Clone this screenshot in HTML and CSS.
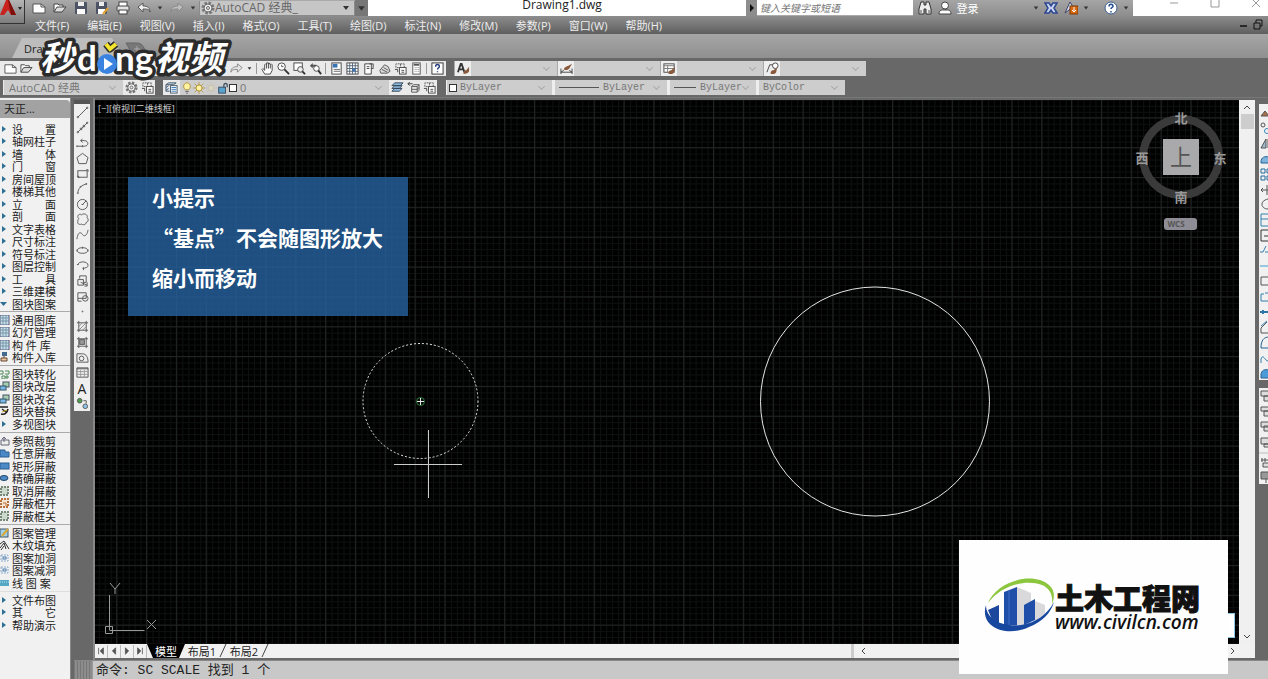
FILE: index.html
```
<!DOCTYPE html>
<html lang="zh-CN">
<head>
<meta charset="UTF-8">
<meta name="viewport" content="width=device-width, initial-scale=1.0">
<title>Drawing1.dwg</title>
<link rel="stylesheet" href="styles.css">
</head>
<body>

<!-- icon set -->
<svg class="defs" aria-hidden="true">
<symbol id="i-new" viewBox="0 0 14 14"><path d="M1 3h8l4 3v6H1z" fill="#fff" stroke="#555"/><path d="M9 3v3h4" fill="none" stroke="#555"/></symbol>
<symbol id="i-open" viewBox="0 0 14 14"><path d="M1 11V3h4l1 1h4v2" fill="#fff" stroke="#444"/><path d="M1 11l3-5h9l-4 5z" fill="#ddd" stroke="#444"/></symbol>
<symbol id="i-save" viewBox="0 0 14 14"><rect x="1" y="1" width="12" height="12" rx="1" fill="#4b5364"/><rect x="4" y="1" width="6" height="4" fill="#eee"/><rect x="3" y="8" width="8" height="5" fill="#fff"/></symbol>
<symbol id="i-saveas" viewBox="0 0 14 14"><rect x="1" y="1" width="11" height="12" rx="1" fill="#4b5364"/><rect x="4" y="1" width="5" height="4" fill="#eee"/><rect x="3" y="8" width="7" height="5" fill="#fff"/><path d="M8 13l5-6" stroke="#e0a030" stroke-width="2"/></symbol>
<symbol id="i-print" viewBox="0 0 14 14"><rect x="3" y="1" width="8" height="5" fill="#fff" stroke="#444"/><rect x="1" y="5" width="12" height="5" rx="1" fill="#e4e4e4" stroke="#444"/><rect x="3" y="9" width="8" height="4" fill="#fff" stroke="#444"/></symbol>
<symbol id="i-undo" viewBox="0 0 14 14"><path d="M1 6l5-4v3c5 0 7 2 7 6-1-3-3-3-7-3v3z" fill="#eee" stroke="#555"/></symbol>
<symbol id="i-redo" viewBox="0 0 14 14"><path d="M13 6L8 2v3C3 5 1 7 1 11c1-3 3-3 7-3v3z" fill="#ddd" fill-opacity=".5" stroke="#888"/></symbol>
<symbol id="i-gear" viewBox="0 0 14 14"><circle cx="7" cy="7" r="5" fill="none" stroke="#777" stroke-width="3" stroke-dasharray="2.4 1.5"/><circle cx="7" cy="7" r="4" fill="#eee" stroke="#666"/><circle cx="7" cy="7" r="1.500" fill="none" stroke="#666"/></symbol>
<symbol id="i-hand" viewBox="0 0 14 14"><path d="M4 13L1 8l1-1 2 2V3l1-1 1 1V1h2v1l1-1 1 2 1-1 1 1v6l-2 4z" fill="#fff" stroke="#444"/><path d="M6 3v4M8 2v5M10 3v4" stroke="#444"/></symbol>
<symbol id="i-zoom" viewBox="0 0 14 14"><circle cx="5" cy="5" r="4" fill="#fff" stroke="#444"/><path d="M8 8l5 5" stroke="#333" stroke-width="2"/><path d="M5 3v2h2" fill="none" stroke="#555"/></symbol>
<symbol id="i-zoomwin" viewBox="0 0 14 14"><rect x="1" y="1" width="9" height="8" fill="#fff" stroke="#444"/><circle cx="8" cy="8" r="3" fill="#eee" stroke="#444"/><path d="M10 10l3 3" stroke="#333" stroke-width="2"/></symbol>
<symbol id="i-zoomprev" viewBox="0 0 14 14"><path d="M1 4l3-3v2h4v2H4v2z" fill="#555"/><circle cx="8" cy="7" r="3" fill="#fff" stroke="#444"/><path d="M10 9l3 4" stroke="#333" stroke-width="2"/></symbol>
<symbol id="i-props" viewBox="0 0 14 14"><rect x="2" y="1" width="10" height="12" fill="#fff" stroke="#444"/><rect x="3" y="2" width="5" height="4" fill="#3875b5"/><path d="M4 8h7M4 10h7" stroke="#666"/></symbol>
<symbol id="i-grid" viewBox="0 0 14 14"><rect x="1" y="1" width="12" height="12" fill="#fff" stroke="#444"/><path d="M1 4h12M1 7h12M1 10h12M4 1v12M7 1v12M10 1v12" stroke="#567"/><rect x="7" y="7" width="3" height="3" fill="#3875b5"/></symbol>
<symbol id="i-palette" viewBox="0 0 14 14"><path d="M3 2h7v11H3z" fill="#fff" stroke="#444"/><path d="M8 2h4v5h-2M5 5h3M5 7h3" fill="none" stroke="#444"/></symbol>
<symbol id="i-markup" viewBox="0 0 14 14"><path d="M2 9l5-6 4 2 2 5-3 2H3z" fill="#ddd" stroke="#555"/><path d="M4 8l6 3M6 6l5 3" stroke="#555"/></symbol>
<symbol id="i-sheets" viewBox="0 0 14 14"><path d="M2 6V2h5v4zM7 2h4v4" fill="none" stroke="#555" stroke-dasharray="2 1"/><rect x="6" y="6" width="7" height="7" fill="#fff" stroke="#444"/><path d="M1 8h3v3M8 9h3M8 11h3" fill="none" stroke="#444"/></symbol>
<symbol id="i-calc" viewBox="0 0 14 14"><rect x="3" y="1" width="8" height="12" fill="#fff" stroke="#555"/><path d="M4 3h6" stroke="#555" stroke-width="2"/><path d="M5 6h5M5 8h5M5 10h5" stroke="#777" stroke-dasharray="1 1"/></symbol>
<symbol id="i-help" viewBox="0 0 14 14"><rect x="1" y="1" width="12" height="12" fill="#fff" stroke="#333"/><path d="M5 5c0-3 4-3 4 0 0 1-2 1.500-2 3M7 10v1" fill="none" stroke="#223a7a" stroke-width="1.500"/></symbol>
<symbol id="i-brush" viewBox="0 0 14 14"><path d="M1 11L4 2h1l3 9M3 8h4" fill="none" stroke="#333" stroke-width="2"/><path d="M7 13c0-4 2-4 3-4l3-4v5c-1 2-3 3-6 3" fill="#8a5a3c"/></symbol>
<symbol id="i-dim" viewBox="0 0 14 14"><path d="M1 7v6M13 7v6M1 11h12M1 11l3-2M13 11l-3-2" fill="none" stroke="#444"/><path d="M4 8c1-3 3-3 5-4l4-2-3 5c-2 2-4 2-6 1" fill="#8a5a3c"/></symbol>
<symbol id="i-tblstyle" viewBox="0 0 14 14"><rect x="1" y="2" width="11" height="9" fill="#fff" stroke="#444"/><path d="M1 4h11M5 4v7M1 7h11" stroke="#777"/><path d="M6 13c0-4 2-4 3-4l4-4-1 6c-1 2-3 2-6 2" fill="#8a5a3c"/></symbol>
<symbol id="i-leader" viewBox="0 0 14 14"><path d="M1 11l3-8h4" fill="none" stroke="#444"/><circle cx="10" cy="4" r="3" fill="#fff" stroke="#444"/><path d="M5 13c0-4 2-4 3-4l4-3-1 5c-1 2-3 2-6 2" fill="#8a5a3c"/></symbol>
<symbol id="i-layer" viewBox="0 0 14 14"><path d="M1 4l3-2h8l-3 2zM1 7l3-2M1 10l3-2M1 4v7h4" fill="#cde" stroke="#456"/><rect x="6" y="5" width="7" height="8" fill="#fff" stroke="#456"/><path d="M7 7h5M7 9h5M7 11h5" stroke="#3875b5"/></symbol>
<symbol id="i-layers" viewBox="0 0 14 14"><path d="M1 11l3-3h8l-3 3zM1 8l3-3h8l-3 3zM1 5l3-3h9l-3 3z" fill="#8fb9dc" stroke="#345"/></symbol>
<symbol id="i-layerprev" viewBox="0 0 14 14"><path d="M1 3h5M3 1L1 3l2 2" fill="none" stroke="#333"/><path d="M5 6l2-2h6l-2 2zM5 6v6h6l2-2V4M5 9h6l2-2M11 6v6" fill="none" stroke="#555"/></symbol>
<symbol id="i-bulb" viewBox="0 0 14 14"><path d="M5 9C1 5 4 1 7 1s6 4 2 8z" fill="#fff2a0" stroke="#a98a30"/><path d="M5 11h4M6 13h2" stroke="#555"/></symbol>
<symbol id="i-sun" viewBox="0 0 14 14"><path d="M7 0v14M0 7h14M2 2l10 10M12 2L2 12" stroke="#b8963c"/><circle cx="7" cy="7" r="3.500" fill="#fff2a0" stroke="#a98a30"/></symbol>
<symbol id="i-lock" viewBox="0 0 14 14"><path d="M8 7V4c0-3 4-3 4 0v2" fill="none" stroke="#456" stroke-width="1.500"/><rect x="2" y="6" width="8" height="7" fill="#5ba3cf" stroke="#345"/></symbol>
<symbol id="i-down" viewBox="0 0 8 8"><path d="M1 2h6L4 6z" fill="#333"/></symbol>
<symbol id="i-search" viewBox="0 0 14 14"><path d="M1 8l2-7h3v3h2V1h3l2 7v5H8V8H6v5H1z" fill="#eee" stroke="#333"/><path d="M3 9v3M11 9v3" stroke="#555"/></symbol>
<symbol id="i-user" viewBox="0 0 14 14"><circle cx="7" cy="4.500" r="3.500" fill="#fff" stroke="#444"/><path d="M1 13c0-4 3-4 4-4h4c1 0 4 0 4 4z" fill="#fff" stroke="#444"/></symbol>
<symbol id="i-x" viewBox="0 0 14 14"><path d="M1 2h4l2 3 2-3h4L10 7l3 5H9L7 9l-2 3H1l3-5z" fill="#c8d4f2" stroke="#2c4690" stroke-width="1.500"/></symbol>
<symbol id="i-update" viewBox="0 0 14 14"><path d="M1 12l5-11 3 5z" fill="#cfe0f5" stroke="#446"/><rect x="6" y="5" width="8" height="8" fill="#d86a14" stroke="#803800"/><path d="M10 6v4M8 9l2 2 2-2" fill="none" stroke="#fff"/></symbol>
<symbol id="i-about" viewBox="0 0 14 14"><circle cx="7" cy="7" r="6" fill="#fff" stroke="#3b5f92"/><path d="M5 5.500c0-3 4-3 4 0 0 1-2 1-2 2.500M7 10v1.500" fill="none" stroke="#24508f" stroke-width="1.500"/></symbol>

<symbol id="d-line" viewBox="0 0 14 14"><path d="M2 12L12 2"/><circle cx="2" cy="12" r=".8"/><circle cx="12" cy="2" r=".8"/></symbol>
<symbol id="d-xline" viewBox="0 0 14 14"><path d="M2 12L12 2"/><circle cx="2" cy="12" r=".8"/><circle cx="12" cy="2" r=".8"/><circle cx="5.500" cy="8.500" r="1"/><circle cx="8.500" cy="5.500" r="1"/></symbol>
<symbol id="d-pline" viewBox="0 0 14 14"><path d="M1 11h8c5 0 5-6 0-6H5M1 10v2M7 3L5 5l2 2M7 10v2"/></symbol>
<symbol id="d-poly" viewBox="0 0 14 14"><path d="M7 1.500l6 4.500-2 6.500H3L1 6z"/></symbol>
<symbol id="d-rect" viewBox="0 0 14 14"><rect x="2" y="4" width="10" height="7"/><path d="M1 10h2v2M11 3h2v2"/></symbol>
<symbol id="d-arc" viewBox="0 0 14 14"><path d="M2 12c0-5 4-9 10-10M1 12h2M4 5h2M11 1v2"/></symbol>
<symbol id="d-circle" viewBox="0 0 14 14"><circle cx="7" cy="7" r="5.500"/><path d="M7 7l4-4M6 7h2"/></symbol>
<symbol id="d-cloud" viewBox="0 0 14 14"><path d="M3 6c-3-3 1-6 3-4 2-2 7-1 6 3 2 2 1 5-1 5 0 3-4 3-5 2-3 1-5-1-4-3 0-1 0-2 1-3z"/></symbol>
<symbol id="d-spline" viewBox="0 0 14 14"><path d="M1 12c1-8 4-8 6-5s5 1 6-5"/></symbol>
<symbol id="d-ellipse" viewBox="0 0 14 14"><ellipse cx="7" cy="7" rx="5.500" ry="3"/><path d="M1 6v2M13 6v2M7 3v2"/></symbol>
<symbol id="d-earc" viewBox="0 0 14 14"><path d="M2 6c1-4 11-4 11 1 0 2-3 3-6 3M8 9v3M1 6h2"/></symbol>
<symbol id="d-insert" viewBox="0 0 14 14"><path d="M4 5V2h7v7H8M2 6h6v6H2zM5 9l7 3M12 9v4H9"/></symbol>
<symbol id="d-block" viewBox="0 0 14 14"><path d="M2 3h9v6H2z"/><circle cx="10" cy="9" r="3"/><path d="M2 9v3h4"/></symbol>
<symbol id="d-point" viewBox="0 0 14 14"><circle cx="7" cy="7" r=".5"/></symbol>
<symbol id="d-hatch" viewBox="0 0 14 14"><path d="M3 1v12M11 1v12M1 3h12M1 11h12"/><path d="M3 7l4-4M3 11l8-8M7 11l4-4" stroke="#888"/></symbol>
<symbol id="d-grad" viewBox="0 0 14 14"><rect x="4" y="4" width="5" height="5" fill="#999"/><path d="M3 1v12M11 1v12M1 3h12M1 11h12"/></symbol>
<symbol id="d-region" viewBox="0 0 14 14"><path d="M1 12V3h6c4 0 6 4 6 9z"/><circle cx="6" cy="8" r="2.500"/></symbol>
<symbol id="d-table" viewBox="0 0 14 14"><path d="M1 2h12v10H1zM1 3h12"/><path d="M1 6h12M1 9h12M5 4v8M9 4v8" stroke="#999"/></symbol>
<symbol id="d-add" viewBox="0 0 14 14"><circle cx="4" cy="4" r="2.500" fill="#4ba04b"/><circle cx="10" cy="10" r="2.500" fill="#8cc6ea"/><path d="M8 4h3v3"/></symbol>

<symbol id="p-arrow" viewBox="0 0 10 10"><path d="M2 2v6l4-3z" fill="#2f6f93"/></symbol>
<symbol id="p-open" viewBox="0 0 10 10"><path d="M0 3h7L3.500 7z" fill="#2f6f93"/></symbol>
<symbol id="p-lib" viewBox="0 0 10 10"><rect x="0" y="0" width="9" height="10" fill="#c6dfea" stroke="#557"/><path d="M0 3h9M0 6h9M3 0v10M6 0v10" stroke="#7896a8"/></symbol>
<symbol id="p-in" viewBox="0 0 10 10"><rect x="2" y="0" width="5" height="4" fill="#456a90"/><path d="M4 4v2M1 6h6v3H1z" fill="#f0c8a0" stroke="#643"/></symbol>
<symbol id="p-conv" viewBox="0 0 10 10"><path d="M0 2h3v3H0M5 2h4v3H5M2 7h3v3H2zM7 6v4M5 8h4" fill="none" stroke="#4c8a58"/></symbol>
<symbol id="p-edit" viewBox="0 0 10 10"><rect x="3" y="1" width="6" height="5" fill="#a8d0b0" stroke="#456"/><rect x="0" y="5" width="6" height="4" fill="#7ab8e8" stroke="#356"/></symbol>
<symbol id="p-swap" viewBox="0 0 10 10"><path d="M0 1h8M1 8c4 1 6-1 7-5M2 3l4 3" stroke="#222" stroke-width="1.500" fill="none"/><path d="M2 6l5-2" stroke="#c8aa30"/></symbol>
<symbol id="p-clip" viewBox="0 0 10 10"><path d="M1 4h8v5H1zM4 6V1M2 3l2-2 2 2" fill="#eee" stroke="#667"/></symbol>
<symbol id="p-blue" viewBox="0 0 10 10"><path d="M0 2h5v2h4v5H0z" fill="#4b89c7" stroke="#2c5d90"/></symbol>
<symbol id="p-box" viewBox="0 0 10 10"><rect x="0" y="2" width="9" height="6" fill="#4b89c7" stroke="#2c5d90"/></symbol>
<symbol id="p-oval" viewBox="0 0 10 10"><ellipse cx="4" cy="5" rx="4" ry="2.500" fill="#4b89c7" stroke="#24456a"/></symbol>
<symbol id="p-frame" viewBox="0 0 10 10"><rect x="1" y="1" width="7" height="8" fill="#ccd8cc" stroke="#788878" stroke-width="2" stroke-dasharray="2 1"/></symbol>
<symbol id="p-orange" viewBox="0 0 10 10"><rect x="1" y="1" width="7" height="8" fill="#f6e5d4" stroke="#b8703c" stroke-width="2" stroke-dasharray="2 1"/><path d="M3 5h3v3" stroke="#b8703c" fill="none"/></symbol>
<symbol id="p-pen" viewBox="0 0 10 10"><rect x="0" y="1" width="8" height="8" fill="#9fd0e8" stroke="#456"/><path d="M2 8l6-7" stroke="#d8a830" stroke-width="2"/></symbol>
<symbol id="p-wood" viewBox="0 0 10 10"><path d="M0 4l4-3 5 8M0 8l4-5 2 6M1 10l3-4" fill="none" stroke="#333"/></symbol>
<symbol id="p-hole" viewBox="0 0 10 10"><rect x="1" y="2" width="7" height="6" fill="#eef4fa" stroke="#8ba8c6" stroke-dasharray="2 1"/><rect x="3" y="4" width="3" height="2" fill="#fff" stroke="#4a78a8"/></symbol>
<symbol id="p-strip" viewBox="0 0 10 10"><rect x="0" y="2" width="9" height="6" fill="#55a8c4"/><path d="M0 4h9" stroke="#bde" stroke-dasharray="1 1"/></symbol>
</svg>

<header class="titlebar">
<div class="quick">
<button class="app" aria-label="应用程序菜单"><svg viewBox="0 0 24 23"><path d="M0 15L6 0h3l7 15h-5L8 10l-4 5z" fill="#c9211e"/><path d="M8 0l3 15h5L9 0z" fill="#7d100d"/><path d="M18 7h4l-2 3z" fill="#222"/></svg></button>
<button aria-label="新建"><svg><use href="#i-new"/></svg></button>
<button aria-label="打开"><svg><use href="#i-open"/></svg></button>
<button aria-label="保存"><svg><use href="#i-save"/></svg></button>
<button aria-label="另存为"><svg><use href="#i-saveas"/></svg></button>
<button aria-label="打印"><svg><use href="#i-print"/></svg></button>
<button aria-label="放弃"><svg><use href="#i-undo"/></svg></button>
<button class="tiny" aria-label="放弃列表"><svg><use href="#i-down"/></svg></button>
<button aria-label="重做"><svg><use href="#i-redo"/></svg></button>
<button class="tiny" aria-label="重做列表"><svg><use href="#i-down"/></svg></button>
<div class="workspace">
<svg class="gear"><use href="#i-gear"/></svg>
<select aria-label="工作空间"><option>AutoCAD 经典_</option></select>
<svg class="caret"><use href="#i-down"/></svg>
</div>
<button class="more" aria-label="自定义"><svg><use href="#i-down"/></svg></button>
</div>
<h1 class="title">Drawing1.dwg</h1>
<div class="search"><button aria-label="展开"><svg viewBox="0 0 8 8"><path d="M2 0v8l4-4z" fill="#111"/></svg></button><input type="text" placeholder="键入关键字或短语" aria-label="搜索"></div>
<div class="account">
<button aria-label="查找"><svg><use href="#i-search"/></svg></button>
<button class="login"><svg><use href="#i-user"/></svg>登录</button>
<button class="tiny push" aria-label="账户"><svg><use href="#i-down"/></svg></button>
<button aria-label="Exchange"><svg><use href="#i-x"/></svg></button>
<button aria-label="更新"><svg><use href="#i-update"/></svg></button>
<button class="tiny" aria-label="更新列表"><svg><use href="#i-down"/></svg></button>
<button class="about" aria-label="帮助"><svg><use href="#i-about"/></svg></button>
<button class="tiny" aria-label="帮助列表"><svg><use href="#i-down"/></svg></button>
</div>
<div class="window">
<button aria-label="最小化"><svg viewBox="0 0 10 10"><path d="M1 5h8"/></svg></button>
<button aria-label="最大化"><svg viewBox="0 0 10 10"><path d="M1 1h8v8H1z"/></svg></button>
<button aria-label="关闭"><svg viewBox="0 0 10 10"><path d="M1 1l8 8M9 1L1 9"/></svg></button>
</div>
</header>

<nav class="menubar">
<button>文件(F)</button>
<button>编辑(E)</button>
<button>视图(V)</button>
<button>插入(I)</button>
<button>格式(O)</button>
<button>工具(T)</button>
<button>绘图(D)</button>
<button>标注(N)</button>
<button>修改(M)</button>
<button>参数(P)</button>
<button>窗口(W)</button>
<button>帮助(H)</button>
<svg class="docwin" viewBox="0 0 24 12"><path d="M0 7h7" stroke="#111" stroke-width="1.500"/><path d="M14 4h6v6h-6zM16 4V1h6v6h-2" fill="none" stroke="#111"/></svg>
</nav>

<div class="filetabs">
<button class="filetab">Drawing1</button>
<button class="newtab" aria-label="新图形"><svg viewBox="0 0 24 16"><path d="M2 1h11c6 0 8 6 9 12H12C8 13 6 8 2 1z" fill="#777" stroke="#666"/><path d="M13 4v6M10 7h6" stroke="#aaa"/></svg></button>
</div>

<div class="toolbars">
<div class="row">
<div class="bar light std">
<button aria-label="新建"><svg><use href="#i-new"/></svg></button>
<button aria-label="打开"><svg><use href="#i-open"/></svg></button>
<button class="push" aria-label="重做"><svg><use href="#i-redo"/></svg></button>
<button class="tiny" aria-label="重做列表"><svg><use href="#i-down"/></svg></button>
<i class="sep"></i>
<button aria-label="平移"><svg><use href="#i-hand"/></svg></button>
<button aria-label="缩放"><svg><use href="#i-zoom"/></svg></button>
<button aria-label="窗口缩放"><svg><use href="#i-zoomwin"/></svg></button>
<button aria-label="缩放上一个"><svg><use href="#i-zoomprev"/></svg></button>
<i class="sep"></i>
<button aria-label="特性"><svg><use href="#i-props"/></svg></button>
<button aria-label="设计中心"><svg><use href="#i-grid"/></svg></button>
<button aria-label="工具选项板"><svg><use href="#i-palette"/></svg></button>
<button aria-label="图纸集"><svg><use href="#i-markup"/></svg></button>
<button aria-label="标记集"><svg><use href="#i-sheets"/></svg></button>
<button aria-label="计算器"><svg><use href="#i-calc"/></svg></button>
<i class="sep"></i>
<button aria-label="帮助"><svg><use href="#i-help"/></svg></button>
</div>
<div class="bar styles">
<div class="pick"><svg><use href="#i-brush"/></svg><span class="combo"><select aria-label="文字样式"><option></option></select></span></div>
<div class="pick"><svg><use href="#i-dim"/></svg><span class="combo"><select aria-label="标注样式"><option></option></select></span></div>
<div class="pick"><svg><use href="#i-tblstyle"/></svg><span class="combo"><select aria-label="表格样式"><option></option></select></span></div>
<div class="pick"><svg><use href="#i-leader"/></svg><span class="combo"><select aria-label="引线样式"><option></option></select></span></div>
</div>
</div>
<div class="row">
<div class="bar light space">
<span class="combo"><select aria-label="工作空间设置"><option>AutoCAD 经典</option></select></span>
<button aria-label="设置"><svg><use href="#i-gear"/></svg></button>
<button aria-label="保存空间"><svg><use href="#i-sheets"/></svg></button>
</div>
<div class="bar light layer">
<button aria-label="图层特性"><svg><use href="#i-layer"/></svg></button>
<span class="combo state">
<svg><use href="#i-bulb"/></svg><svg><use href="#i-sun"/></svg><svg class="dim"><use href="#i-sun"/></svg><svg><use href="#i-lock"/></svg><b class="swatch"></b>
<select aria-label="图层"><option>0</option></select></span>
<button aria-label="置为当前"><svg><use href="#i-layers"/></svg></button>
<button aria-label="上一图层"><svg><use href="#i-layerprev"/></svg></button>
<button aria-label="图层状态"><svg><use href="#i-sheets"/></svg></button>
</div>
<div class="bar props">
<span class="combo color"><b class="swatch"></b><select aria-label="颜色"><option>ByLayer</option></select></span>
<span class="combo ltype"><b class="rule"></b><select aria-label="线型"><option>ByLayer</option></select></span>
<span class="combo lweight"><b class="rule"></b><select aria-label="线宽"><option>ByLayer</option></select></span>
<span class="combo plot"><select aria-label="打印样式"><option>ByColor</option></select></span>
</div>
</div>
</div>

<div class="main">
<aside class="palette">
<h2>天正...</h2>
<ul>
<li><svg><use href="#p-arrow"/></svg>设　　置</li>
<li><svg><use href="#p-arrow"/></svg>轴网柱子</li>
<li><svg><use href="#p-arrow"/></svg>墙　　体</li>
<li><svg><use href="#p-arrow"/></svg>门　　窗</li>
<li><svg><use href="#p-arrow"/></svg>房间屋顶</li>
<li><svg><use href="#p-arrow"/></svg>楼梯其他</li>
<li><svg><use href="#p-arrow"/></svg>立　　面</li>
<li><svg><use href="#p-arrow"/></svg>剖　　面</li>
<li><svg><use href="#p-arrow"/></svg>文字表格</li>
<li><svg><use href="#p-arrow"/></svg>尺寸标注</li>
<li><svg><use href="#p-arrow"/></svg>符号标注</li>
<li><svg><use href="#p-arrow"/></svg>图层控制</li>
<li><svg><use href="#p-arrow"/></svg>工　　具</li>
<li><svg><use href="#p-arrow"/></svg>三维建模</li>
<li><svg><use href="#p-open"/></svg>图块图案</li>
</ul>
<ul class="tight">
<li><svg><use href="#p-lib"/></svg>通用图库</li>
<li><svg><use href="#p-lib"/></svg>幻灯管理</li>
<li><svg><use href="#p-lib"/></svg>构 件 库</li>
<li><svg><use href="#p-in"/></svg>构件入库</li>
</ul>
<ul>
<li><svg><use href="#p-conv"/></svg>图块转化</li>
<li><svg><use href="#p-edit"/></svg>图块改层</li>
<li><svg><use href="#p-edit"/></svg>图块改名</li>
<li><svg><use href="#p-swap"/></svg>图块替换</li>
<li><svg><use href="#p-arrow"/></svg>多视图块</li>
</ul>
<ul>
<li><svg><use href="#p-clip"/></svg>参照裁剪</li>
<li><svg><use href="#p-blue"/></svg>任意屏蔽</li>
<li><svg><use href="#p-box"/></svg>矩形屏蔽</li>
<li><svg><use href="#p-oval"/></svg>精确屏蔽</li>
<li><svg><use href="#p-frame"/></svg>取消屏蔽</li>
<li><svg><use href="#p-orange"/></svg>屏蔽框开</li>
<li><svg><use href="#p-frame"/></svg>屏蔽框关</li>
</ul>
<ul>
<li><svg><use href="#p-pen"/></svg>图案管理</li>
<li><svg><use href="#p-wood"/></svg>木纹填充</li>
<li><svg><use href="#p-hole"/></svg>图案加洞</li>
<li><svg><use href="#p-hole"/></svg>图案减洞</li>
<li><svg><use href="#p-strip"/></svg>线 图 案</li>
</ul>
<ul class="faint">
<li><svg><use href="#p-arrow"/></svg>文件布图</li>
<li><svg><use href="#p-arrow"/></svg>其　　它</li>
<li><svg><use href="#p-arrow"/></svg>帮助演示</li>
</ul>
</aside>

<div class="desk">
<div class="work">
<div class="draw">
<button aria-label="直线"><svg><use href="#d-line"/></svg></button>
<button aria-label="构造线"><svg><use href="#d-xline"/></svg></button>
<button aria-label="多段线"><svg><use href="#d-pline"/></svg></button>
<button aria-label="多边形"><svg><use href="#d-poly"/></svg></button>
<button aria-label="矩形"><svg><use href="#d-rect"/></svg></button>
<button aria-label="圆弧"><svg><use href="#d-arc"/></svg></button>
<button aria-label="圆"><svg><use href="#d-circle"/></svg></button>
<button aria-label="修订云线"><svg><use href="#d-cloud"/></svg></button>
<button aria-label="样条曲线"><svg><use href="#d-spline"/></svg></button>
<button aria-label="椭圆"><svg><use href="#d-ellipse"/></svg></button>
<button aria-label="椭圆弧"><svg><use href="#d-earc"/></svg></button>
<button aria-label="插入块"><svg><use href="#d-insert"/></svg></button>
<button aria-label="创建块"><svg><use href="#d-block"/></svg></button>
<button aria-label="点"><svg><use href="#d-point"/></svg></button>
<button aria-label="图案填充"><svg><use href="#d-hatch"/></svg></button>
<button aria-label="渐变色"><svg><use href="#d-grad"/></svg></button>
<button aria-label="面域"><svg><use href="#d-region"/></svg></button>
<button aria-label="表格"><svg><use href="#d-table"/></svg></button>
<button class="letter">A</button>
<button aria-label="添加选定对象"><svg><use href="#d-add"/></svg></button>
</div>

<div class="view">
<div class="canvas">
<svg class="drawing">
<defs>
<pattern id="minor" x="21.700" y="17.800" width="5.968" height="5.968" patternUnits="userSpaceOnUse"><path d="M.5 0v6M0 .5h6" stroke="#0e1010"/></pattern>
<pattern id="major" x="21.200" y="17.300" width="29.840" height="29.840" patternUnits="userSpaceOnUse"><path d="M.5 0v30M0 .5h30" stroke="#212424"/></pattern>
</defs>
<rect width="100%" height="100%" fill="url(#minor)"/>
<rect width="100%" height="100%" fill="url(#major)"/>
<circle cx="325.500" cy="301" r="57.500" class="selected"/>
<circle cx="780" cy="301.500" r="114.500" class="shape"/>
<circle cx="325.500" cy="301.500" r="4" class="snap"/>
<path d="M322 301.500h7M325.500 298v7" class="shape"/>
<path d="M299 364.500h68M333.500 330v68" class="cross"/>
<path d="M10.500 526.500h7v7h-7zM14.500 530.500h35M14.500 530V495M15 483l5 6 5-6M20 489v5M52 520l9 9M61 520l-9 9" class="ucs"/>
</svg>
<span class="viewname">[−][俯视][二维线框]</span>
<div class="tip">
<p>小提示</p>
<p>“基点”不会随图形放大</p>
<p>缩小而移动</p>
</div>
<svg class="viewcube" viewBox="0 0 100 130">
<circle cx="50" cy="52" r="38" fill="none" stroke="#3a3a3a" stroke-width="8"/>
<rect x="32" y="34" width="36" height="36" fill="#a9a9ab"/>
<text x="50" y="60" class="top">上</text>
<text x="50" y="18">北</text>
<text x="50" y="97">南</text>
<text x="11" y="58">西</text>
<text x="89" y="58">东</text>
<rect x="33" y="113" width="33" height="12" rx="3" fill="#8e8d95"/>
<text x="45" y="122" class="wcs">WCS</text>
</svg>
</div>
<div class="vscroll"><svg viewBox="0 0 10 10"><path d="M2 6l3-3 3 3"/></svg><i></i><svg class="end" viewBox="0 0 10 10"><path d="M2 4l3 3 3-3"/></svg></div>
<div class="layouts">
<button class="step" aria-label="第一个"><svg viewBox="0 0 10 10"><path d="M2 1v8M8 1v8L4 5z"/></svg></button>
<button class="step" aria-label="上一个"><svg viewBox="0 0 10 10"><path d="M7 1v8L3 5z"/></svg></button>
<button class="step" aria-label="下一个"><svg viewBox="0 0 10 10"><path d="M3 1v8l4-4z"/></svg></button>
<button class="step" aria-label="最后一个"><svg viewBox="0 0 10 10"><path d="M8 1v8M2 1v8l4-4z"/></svg></button>
<button class="model">模型</button>
<button class="sheet">布局1</button>
<svg class="slash" viewBox="0 0 8 14"><path d="M1 13L7 0"/></svg>
<button class="sheet">布局2</button>
<svg class="slash" viewBox="0 0 8 14"><path d="M1 13L7 0"/></svg>
<div class="hscroll"><svg viewBox="0 0 10 10"><path d="M6 2L3 5l3 3"/></svg><svg viewBox="0 0 10 10"><path d="M4 2l3 3-3 3"/></svg></div>
</div>
</div>

<div class="modify">
<svg class="mod" viewBox="0 0 9 276">
<g fill="none" stroke="#555">
<path d="M2 12l4-5 4 5z" fill="#a8714a"/>
<circle cx="4" cy="21" r="2"/><circle cx="8" cy="27" r="2.500" stroke="#3a87bd"/>
<path d="M2 44l5-9v9zM9 35v9" fill="#9dbbd0"/>
<path d="M2 58c0-5 4-6 8-5v6H2z" fill="#7eb3dc" stroke="#256395"/>
<path d="M2 65h4v4H2zM2 72h4v4H2zM8 65h4v4H8zM8 72h4v4H8z" stroke="#256b9c"/>
<path d="M2 86h8M4 84l-2 2 2 2M8 81v10"/>
<path d="M9 95c-9 2-7 10 0 10"/>
<path d="M2 110h8v12H2zM2 115h8" stroke="#3480ad"/>
<path d="M10 126H2v11h8M5 132h6" stroke="#333"/>
<path d="M1 148h3l3-6M6 148h4" stroke="#3480ad"/>
<path d="M1 162h10" stroke="#3aa0d0"/>
<path d="M10 173H2v8h8"/>
<path d="M2 190v7h8M2 190h3M6 189h4" stroke="#3480ad"/>
<path d="M1 208h10M4 206v4" stroke="#2b77a8" stroke-width="2"/>
<path d="M2 229v-5l6-6M2 229h8"/><path d="M2 222l6-5" stroke="#3480ad"/>
<path d="M10 233c-5 0-8 3-8 11h8" stroke="#256395"/>
<path d="M2 259v-4c2-6 4 2 7 2" stroke="#3480ad"/>
<path d="M2 271c0-5 4-6 8-5v8H2z" fill="#4a9bd8" stroke="#256395"/>
</g>
</svg>
<svg class="order" viewBox="0 0 9 96">
<g fill="#ddd" stroke="#555"><path d="M2 3h10v5H2zM5 8h8v5H5zM2 19h10v4H2zM5 23h8v5H5zM2 34h8v5H2zM5 38h8v5H5zM2 50h10v6H2zM5 56h8v3H5z"/><path d="M0 65h9" stroke="#bbb"/><path d="M2 72h8M3 70v4M6 70v4M4 75h8v4H4z"/><path d="M2 84h10v7H2zM7 91v4" fill="#999"/></g>
</svg>
</div>
</div>
<div class="command"><i class="grip"></i><output>命令: SC SCALE 找到 1 个</output></div>
</div>
</div>

<!-- video channel mark -->
<svg class="channel" viewBox="0 0 200 50">
<g class="mark"><text x="4" y="34" class="han">秒</text><text x="41" y="35" class="lat">d</text><text x="79" y="35" class="lat">ng</text><text x="119" y="34" class="han">视频</text></g>
<circle cx="71" cy="28" r="10" fill="#3a83e0"/>
<path d="M68 22v12l9-6z" fill="#fff"/>
<path d="M70 8l4 5 6-5" fill="none" stroke="#2b2b2b" stroke-width="7" stroke-linejoin="round"/>
<path d="M70 8l4 5 6-5" fill="none" stroke="#f4e42c" stroke-width="4"/>
</svg>

<i class="behind"></i>
<div class="sitecard">
<svg class="emblem" viewBox="0 0 72 60">
<path d="M5 33l11-5v20l-6-3z" fill="#1c479c"/>
<path d="M34 10l14 6v32H34z" fill="#d9d9dc"/><path d="M52 24l10 4v10l-10 9z" fill="#d9d9dc"/>
<path d="M21 15l13-5v38H21zM41 28l11-6v21l-11 5z" fill="#1f4fa8"/><path d="M26 13v35" stroke="#3d6fc4"/>
<path d="M5 26C14 4 50-6 66 8c7 6 5 14 3 20 1-9-1-16-10-20C43 2 18 8 5 26z" fill="#8cc63f"/>
<path d="M3 28c-7 22 20 33 43 22C59 45 68 36 71 25 64 38 52 46 38 48 20 50 3 43 3 28z" fill="#17479e"/>
</svg>
<div class="sitename"><strong>土木工程网</strong><a href="#">www.civilcn.com</a></div>
</div>
</body>
</html>
```

FILE: styles.css
```
* {
box-sizing: border-box;
}
body {
margin: 0;
height: 100vh;
display: flex;
flex-direction: column;
overflow: hidden;
position: relative;
background: #686868;
color: #222;
font-family: "Open Sans", "Noto Sans CJK SC", sans-serif;
font-size: 11px;
}
button, select, input {
font: inherit;
color: inherit;
background: none;
border: 0;
padding: 0;
margin: 0;
}
button {
display: flex;
align-items: center;
justify-content: center;
flex: none;
}
select {
appearance: none;
outline: none;
}
svg {
flex: none;
display: block;
}
h1, h2, p, ul {
margin: 0;
padding: 0;
}
h1, h2 {
font-weight: normal;
}
.defs {
position: absolute;
width: 0;
height: 0;
}

/* title bar */
.titlebar {
display: flex;
height: 16px;
background: #fff;
}
.titlebar button svg {
width: 14px;
height: 14px;
}
.titlebar .tiny svg {
width: 6px;
height: 6px;
}
.quick {
display: flex;
align-items: center;
width: 368px;
background: linear-gradient(#aaa, #8d8d8d);
}
.quick button {
width: 21px;
height: 12px;
}
.quick .tiny {
width: 12px;
}
.quick .app {
position: relative;
z-index: 2;
width: 25px;
height: 24px;
margin-right: 3px;
align-self: flex-start;
background: linear-gradient(#b5b5b5, #7d7d7d);
border-right: 1px solid #333;
border-bottom: 1px solid #333;
}
.quick .app svg {
width: 24px;
height: 23px;
}
.workspace {
display: flex;
align-items: center;
flex: 1;
height: 15px;
padding: 0 4px 0 1px;
background: #c6c6c6;
border: 1px solid #8a8a8a;
border-top: 0;
font-size: 12px;
color: #666;
}
.workspace select {
flex: 1;
width: 100px;
line-height: 14px;
}
.workspace .gear {
width: 14px;
height: 14px;
}
.caret {
width: 8px;
height: 8px;
}
.quick .more {
width: 13px;
height: 16px;
background: #777;
}
.quick .more svg {
width: 9px;
height: 9px;
}
.title {
flex: 1;
padding-left: 10px;
text-align: center;
font-size: 12px;
line-height: 9px;
}
.search {
display: flex;
width: 167px;
}
.search button {
width: 11px;
background: #8d8d8d;
}
.search button svg {
width: 8px;
height: 8px;
}
.search input {
width: 156px;
padding-left: 3px;
border-bottom: 1px solid #aaa;
font-size: 10px;
font-style: italic;
}
.search input::placeholder {
color: #777;
}
.account {
display: flex;
align-items: center;
width: 220px;
padding: 0 2px;
color: #fff;
background: linear-gradient(#a5a5a5, #8d8d8d);
}
.account button {
width: 20px;
height: 12px;
}
.account .login {
width: 46px;
gap: 5px;
}
.account .tiny {
width: 10px;
}
.account .about {
margin-left: 10px;
}
.push {
margin-left: auto;
}
.window {
display: flex;
justify-content: space-between;
width: 135px;
height: 6px;
padding: 0 7px 0 36px;
}
.window button {
height: 6px;
}
.window svg {
fill: none;
stroke: #999;
}
.titlebar .window button svg {
width: 10px;
height: 10px;
}

/* menu and file tabs */
.menubar {
display: flex;
align-items: center;
gap: 18px;
height: 18px;
padding: 0 4px 0 35px;
color: #eee;
background: linear-gradient(#8d8d8d, #5e5e5e);
}
.docwin {
width: 24px;
height: 12px;
margin-left: auto;
}
.filetabs {
display: flex;
align-items: flex-end;
height: 24px;
padding-left: 12px;
background: linear-gradient(#a6a6a6, #909090);
}
.filetab {
width: 112px;
height: 20px;
padding-left: 12px;
justify-content: flex-start;
background: #bdbdbd;
border-radius: 8px 8px 0 0;
clip-path: polygon(0 100%, 10px 0, 100px 0, 100% 100%);
}
.newtab svg {
width: 24px;
height: 16px;
}

/* toolbars */
.toolbars {
display: flex;
flex-direction: column;
gap: 4px;
height: 40px;
padding: 3px 0;
border-bottom: 1px solid #777;
}
.row {
display: flex;
height: 15px;
}
.bar {
display: flex;
align-items: center;
height: 15px;
background: #cdcdcd;
color: #777;
}
.light {
background: #eaeaea;
}
.bar button {
width: 16px;
height: 15px;
}
.bar button svg, .pick > svg {
width: 13px;
height: 13px;
}
.state svg {
width: 12px;
height: 12px;
}
.bar .tiny {
width: 10px;
}
.bar .tiny svg {
width: 5px;
height: 5px;
}
.sep {
width: 1px;
height: 11px;
margin: 0 2px;
background: #999;
}
.std {
width: 446px;
padding: 0 1px 0 2px;
}
.styles {
flex: none;
width: 412px;
margin-left: 8px;
}
.pick {
display: flex;
align-items: center;
flex: 1;
height: 15px;
padding-left: 2px;
background: #eee;
border-left: 1px solid #aaa;
}
.combo {
position: relative;
display: flex;
align-items: center;
flex: 1;
height: 15px;
margin-left: 1px;
background: #cdcdcd;
}
.combo select {
flex: 1;
width: 10px;
height: 15px;
}
.combo::after {
content: "";
width: 4px;
height: 4px;
margin: 0 8px 3px 0;
border: solid #aaa;
border-width: 0 1px 1px 0;
transform: rotate(45deg);
}
.space {
width: 152px;
margin-left: 3px;
}
.space .combo {
padding-left: 5px;
}
.layer {
width: 274px;
margin-left: 8px;
}
.layer .combo {
padding-left: 1px;
}
.dim {
opacity: .2;
}
.swatch {
width: 8px;
height: 8px;
margin-right: 3px;
background: #fff;
border: 1px solid #333;
}
.props {
gap: 2px;
width: 399px;
margin-left: 9px;
background: #eee;
font: 10px "Liberation Mono", monospace;
}
.props .combo {
padding-left: 2px;
}
.props .ltype {
flex: none;
width: 112px;
padding-left: 4px;
}
.props .lweight, .props .plot {
flex: none;
width: 86px;
padding-left: 4px;
}
.rule {
width: 40px;
margin-right: 4px;
border-top: 1px solid #555;
}
.lweight .rule {
width: 22px;
}

/* palette */
.main {
display: flex;
flex: 1;
min-height: 0;
}
.palette {
flex: none;
width: 71px;
padding-top: 2px;
background: #f1f1f1;
border-right: 1px solid #888;
}
.palette h2 {
height: 18px;
margin-bottom: 4px;
padding-left: 4px;
font-size: 11px;
line-height: 18px;
background: #a2a2a2;
border-radius: 0 4px 0 0;
}
.palette ul {
list-style: none;
}
.palette ul + ul {
margin-top: 2px;
padding-top: 1px;
border-top: 1px solid #aaa;
}
.palette ul + .tight {
margin-top: 1px;
}
.palette ul + .faint {
border-color: #ddd;
}
.palette li {
display: flex;
align-items: center;
gap: 2px;
height: 13px;
white-space: nowrap;
}
.palette li:nth-child(even) {
height: 12px;
}
.palette li svg {
width: 10px;
height: 10px;
}

/* drawing area */
.desk {
display: flex;
flex-direction: column;
flex: 1;
min-width: 0;
padding-left: 3px;
}
.work {
display: flex;
flex: 1;
min-height: 0;
}
.draw {
align-self: flex-start;
width: 16px;
margin-top: 2px;
padding-top: 1px;
background: #efefef;
border-top: 4px solid #555;
}
.draw button {
width: 16px;
height: 15px;
}
.draw button:nth-child(3n) {
margin-bottom: 1px;
}
.draw svg {
width: 13px;
height: 13px;
fill: none;
stroke: #555;
}
.draw .letter {
font-size: 14px;
}
.view {
display: grid;
grid-template-columns: 1fr 16px;
grid-template-rows: 1fr 14px;
flex: 1;
min-width: 0;
margin: 0 4px 0 3px;
padding: 2px 0 2px 0;
border-left: 2px solid #888;
}
.canvas {
position: relative;
overflow: hidden;
background: #000;
}
.drawing {
width: 100%;
height: 100%;
}
.shape, .selected, .cross, .ucs {
fill: none;
stroke: #e4e4e4;
}
.selected {
stroke-dasharray: 2 2;
}
.cross {
stroke: #ccc;
}
.ucs {
stroke: #999;
}
.snap {
fill: none;
stroke: #2a7a3a;
}
.viewname {
position: absolute;
left: 3px;
top: 2px;
color: #ccc;
font-size: 9px;
line-height: 14px;
}
.tip {
position: absolute;
left: 33px;
top: 77px;
width: 280px;
padding: 0 24px 19px;
background: rgba(36, 96, 156, .82);
color: #fff;
font: bold 21px/40px "Noto Sans CJK SC", sans-serif;
white-space: nowrap;
}
.viewcube {
position: absolute;
right: 8px;
top: 5px;
width: 100px;
height: 130px;
fill: #999;
font-size: 13px;
font-weight: bold;
text-anchor: middle;
}
.viewcube .top {
font-size: 22px;
font-weight: normal;
fill: #555;
}
.viewcube .wcs {
font-size: 8px;
fill: #555;
}
.vscroll {
display: flex;
flex-direction: column;
align-items: center;
padding: 3px 0;
background: #f0f0f0;
}
.vscroll svg, .hscroll svg {
width: 10px;
height: 10px;
fill: none;
stroke: #444;
}
.vscroll i {
width: 13px;
height: 15px;
margin-top: 1px;
background: #cdcdcd;
}
.vscroll .end {
margin-top: auto;
}
.layouts {
grid-column: 1 / -1;
display: flex;
align-items: center;
background: #f1f1f1;
}
.layouts .step {
width: 13px;
height: 13px;
border-right: 1px solid #bbb;
}
.step svg {
width: 8px;
height: 8px;
fill: #555;
stroke: #555;
}
.model {
width: 38px;
height: 14px;
color: #fff;
background: #000;
clip-path: polygon(0 0, 100% 0, 32px 100%, 6px 100%);
}
.sheet {
width: 34px;
}
.slash {
width: 8px;
height: 14px;
fill: none;
stroke: #444;
}
.hscroll {
display: flex;
align-items: center;
justify-content: space-between;
width: 404px;
height: 14px;
margin-left: auto;
padding: 0 18px 0 5px;
border-left: 3px solid #ccc;
}
.modify {
flex: none;
width: 9px;
padding-top: 6px;
}
.modify svg {
width: 9px;
background: #f1f1f1;
}
.mod {
height: 276px;
}
.order {
height: 96px;
margin-top: 8px;
}
.command {
display: flex;
height: 19px;
background: #c8c8c8;
color: #222;
font: 13px/20px "Liberation Mono", "Noto Sans CJK SC", monospace;
border-top: 1px solid #888;
}
.grip {
width: 19px;
margin-right: 3px;
border-right: 1px solid #999;
background: repeating-linear-gradient(90deg, #777 0 1px, #8c8c8c 1px 3px);
}

/* overlays */
.channel {
position: absolute;
left: 36px;
top: 36px;
width: 200px;
height: 50px;
}
.mark {
fill: #fff;
stroke: #2b2b2b;
stroke-width: 7px;
stroke-linejoin: round;
paint-order: stroke;
}
.han {
font: italic bold 34px "Noto Sans CJK SC", sans-serif;
}
.lat {
font: bold 35px Lato, sans-serif;
}
.behind {
position: absolute;
right: 33px;
bottom: 41px;
width: 10px;
height: 25px;
background: #fff;
border: 1px solid #8cc8e4;
}
.sitecard {
position: absolute;
right: 40px;
bottom: 5px;
display: flex;
align-items: center;
width: 269px;
height: 134px;
padding-left: 24px;
background: #fefefe;
color: #111;
}
.emblem {
width: 72px;
height: 60px;
}
.sitename strong {
display: block;
font: 900 29px/30px "Noto Sans CJK SC", sans-serif;
-webkit-text-stroke: 1px #111;
}
.sitename a {
display: block;
color: #111;
text-decoration: none;
font: italic 600 19px/20px "Open Sans", sans-serif;
}
```
